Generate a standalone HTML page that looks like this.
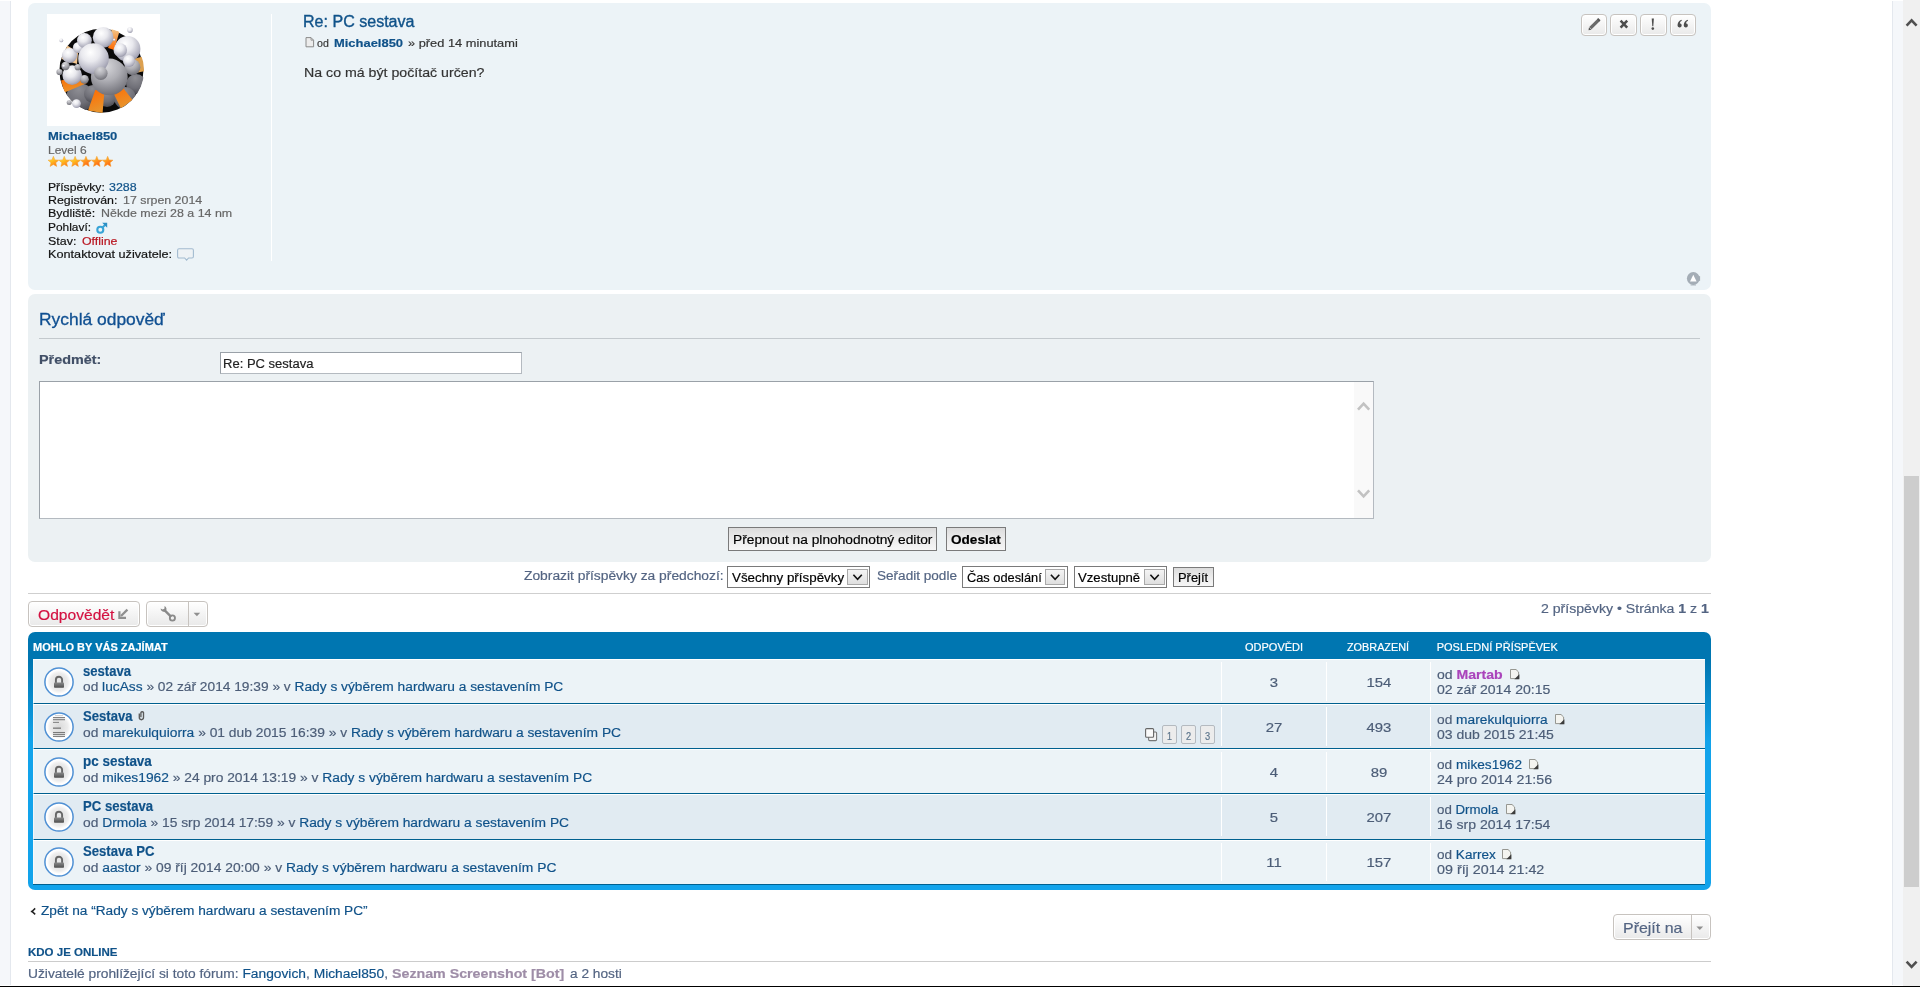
<!DOCTYPE html>
<html lang="cs">
<head>
<meta charset="utf-8">
<title>PC sestava</title>
<style>
html,body{margin:0;padding:0;}
body{width:1920px;height:987px;overflow:hidden;background:#fff;position:relative;font-family:"Liberation Sans",sans-serif;}
.a{position:absolute;box-sizing:border-box;}
.t{position:absolute;white-space:nowrap;line-height:1;font-family:"Liberation Sans",sans-serif;-webkit-text-stroke:0.18px currentColor;}
.t a{color:#105289;text-decoration:none;}
.t b{font-weight:700;}
svg{position:absolute;overflow:visible;}
.btn{border:1px solid #c7c3bf;border-radius:4px;background:linear-gradient(#ffffff,#e9e9e9);box-shadow:inset 0 0 0 1px #fff;}
.fbtn{border:1px solid #7a7a7a;background:linear-gradient(#dcdcdc,#eaeaea 45%,#f6f6f6);}
.sel{border:1px solid #7a7a7a;background:#fff;}
.dd{border:1px solid #a9a9a9;background:linear-gradient(#f4f4f4,#dfdfdf);}
.row{left:33px;width:1672px;height:45px;border-top:1px solid #fff;border-bottom:1px solid #00608f;}
.div{width:1px;background:#fff;height:39px;}
.pbox{border:1px solid #b4bac0;background:#ececec;border-radius:2px;width:15px;height:19px;top:725px;}
</style>
</head>
<body>
<!-- side strips -->
<div class="a" style="left:0;top:1px;width:11px;height:984px;background:#f5f7fa;border-right:1px solid #e4e8ee;"></div>
<div class="a" style="left:1892px;top:1px;width:11px;height:984px;background:#f5f7fa;border-left:1px solid #e4e8ee;"></div>
<!-- page scrollbar -->
<div class="a" style="left:1903px;top:0;width:17px;height:986px;background:#f0f0f0;"></div>
<div class="a" style="left:1904px;top:476px;width:15px;height:411px;background:#cdcdcd;"></div>
<svg style="left:1903px;top:0" width="17" height="987"><path d="M3.6 25.6 L8.6 20.4 L13.6 25.6" fill="none" stroke="#505050" stroke-width="2.6"/><path d="M3.6 961.6 L8.6 966.8 L13.6 961.6" fill="none" stroke="#505050" stroke-width="2.6"/></svg>
<!-- post -->
<div class="a" style="left:28px;top:3px;width:1683px;height:287px;background:#ecf3f7;border-radius:7px;"></div>
<div class="a" style="left:47px;top:14px;width:113px;height:112px;background:#fff;"></div>
<div class="a" style="left:271px;top:14px;width:1px;height:247px;background:#fff;"></div>
<svg style="left:47px;top:14px" width="113" height="112" viewBox="0 0 113 112"><defs>
<radialGradient id="bw" cx="40%" cy="30%" r="75%"><stop offset="0" stop-color="#ffffff"/><stop offset="0.4" stop-color="#e9e9ee"/><stop offset="0.8" stop-color="#b4b4c2"/><stop offset="1" stop-color="#9090a2"/></radialGradient>
<radialGradient id="bg" cx="42%" cy="22%" r="85%"><stop offset="0" stop-color="#d6d6da"/><stop offset="0.45" stop-color="#aeaeb4"/><stop offset="1" stop-color="#66666e"/></radialGradient>
<radialGradient id="bd" cx="45%" cy="20%" r="85%"><stop offset="0" stop-color="#8e8e94"/><stop offset="0.6" stop-color="#6e6e76"/><stop offset="1" stop-color="#47474e"/></radialGradient>
<linearGradient id="og" x1="0" y1="0" x2="0.3" y2="1"><stop offset="0" stop-color="#ff6a00"/><stop offset="1" stop-color="#e8932c"/></linearGradient>
<linearGradient id="og2" x1="0" y1="0" x2="0" y2="1"><stop offset="0" stop-color="#f1c58a"/><stop offset="1" stop-color="#ff6a00"/></linearGradient>
<clipPath id="ball"><circle cx="54.4" cy="56.4" r="42.6"/></clipPath>
</defs><circle cx="54.4" cy="56.8" r="42" fill="#0a0a0a"/><g clip-path="url(#ball)"><circle cx="33.1" cy="83.6" r="14" fill="url(#bd)"/><circle cx="89.1" cy="70.0" r="10" fill="url(#bd)"/><circle cx="60.0" cy="84.0" r="9" fill="url(#bd)"/><circle cx="78.0" cy="84.0" r="11" fill="url(#bd)"/><circle cx="46.0" cy="80.0" r="9" fill="url(#bd)"/><path d="M48.3 76 L57.5 76 L55.6 99 L41 96.5 Z" fill="url(#og)"/><path d="M63.5 73 L73.3 70.6 L85.6 86 L74 94.5 Z" fill="url(#og)"/><path d="M14 66.5 L33.1 62 L40 69 L17.5 78.5 Z" fill="url(#og)"/><path d="M64.7 15 L72.4 17.5 L67.2 36 L61.2 34 Z" fill="url(#og2)"/><path d="M86 45 L96 42.4 L98 57 L91 58.4 Z" fill="#dca050"/><path d="M14.5 45 L20.4 31.5 L31 38.6 L30 50 Z" fill="#f1c48f"/></g><circle cx="85.4" cy="53.2" r="8" fill="url(#bg)"/><circle cx="62.3" cy="62.9" r="18.4" fill="url(#bg)"/><circle cx="25.2" cy="61.1" r="9.8" fill="url(#bw)"/><circle cx="22.5" cy="41.5" r="7.6" fill="url(#bw)"/><circle cx="31.5" cy="33.5" r="5.6" fill="url(#bw)"/><circle cx="18.5" cy="52.0" r="4.2" fill="url(#bg)"/><circle cx="12.5" cy="58.0" r="3.1" fill="url(#bg)"/><circle cx="30.7" cy="53.2" r="3.1" fill="url(#bg)"/><circle cx="37.4" cy="65.3" r="4.4" fill="url(#bg)"/><circle cx="80.6" cy="34.9" r="12.8" fill="url(#bw)"/><circle cx="56.2" cy="23.4" r="10.4" fill="url(#bw)"/><circle cx="37.4" cy="26.4" r="7.4" fill="url(#bw)"/><circle cx="46.5" cy="44.6" r="15.3" fill="url(#bw)"/><circle cx="73.3" cy="36.1" r="6.8" fill="url(#bw)"/><circle cx="53.8" cy="59.2" r="6.8" fill="url(#bg)"/><circle cx="82.0" cy="47.0" r="6" fill="url(#bw)"/><circle cx="29.5" cy="89.6" r="4.4" fill="url(#bw)"/><circle cx="22.2" cy="88.4" r="2.5" fill="url(#bg)"/><circle cx="14.3" cy="26.4" r="1.9" fill="url(#bw)"/><circle cx="83.0" cy="16.1" r="2.8" fill="url(#bw)"/><circle cx="16.7" cy="51.9" r="1.5" fill="url(#bw)"/><circle cx="67.2" cy="25.8" r="1.2" fill="url(#bw)"/></svg><svg style="left:48px;top:156px" width="66" height="12" viewBox="0 0 66 12"><defs><linearGradient id="st1" x1="0" y1="0" x2="0.6" y2="1"><stop offset="0" stop-color="#fff27a"/><stop offset="0.5" stop-color="#ffc21f"/><stop offset="1" stop-color="#ff7a1a"/></linearGradient><linearGradient id="st2" x1="0" y1="0" x2="0.6" y2="1"><stop offset="0" stop-color="#ffd24d"/><stop offset="0.5" stop-color="#ff9a1f"/><stop offset="1" stop-color="#ff5e14"/></linearGradient></defs><polygon points="5.40,0.30 6.87,3.88 10.73,4.17 7.78,6.67 8.69,10.43 5.40,8.40 2.11,10.43 3.02,6.67 0.07,4.17 3.93,3.88" fill="url(#st1)" stroke="#f59a23" stroke-width="0.5" stroke-linejoin="round"/><polygon points="16.25,0.30 17.72,3.88 21.58,4.17 18.63,6.67 19.54,10.43 16.25,8.40 12.96,10.43 13.87,6.67 10.92,4.17 14.78,3.88" fill="url(#st1)" stroke="#f59a23" stroke-width="0.5" stroke-linejoin="round"/><polygon points="27.10,0.30 28.57,3.88 32.43,4.17 29.48,6.67 30.39,10.43 27.10,8.40 23.81,10.43 24.72,6.67 21.77,4.17 25.63,3.88" fill="url(#st1)" stroke="#f59a23" stroke-width="0.5" stroke-linejoin="round"/><polygon points="37.95,0.30 39.42,3.88 43.28,4.17 40.33,6.67 41.24,10.43 37.95,8.40 34.66,10.43 35.57,6.67 32.62,4.17 36.48,3.88" fill="url(#st2)" stroke="#f59a23" stroke-width="0.5" stroke-linejoin="round"/><polygon points="48.80,0.30 50.27,3.88 54.13,4.17 51.18,6.67 52.09,10.43 48.80,8.40 45.51,10.43 46.42,6.67 43.47,4.17 47.33,3.88" fill="url(#st2)" stroke="#f59a23" stroke-width="0.5" stroke-linejoin="round"/><polygon points="59.65,0.30 61.12,3.88 64.98,4.17 62.03,6.67 62.94,10.43 59.65,8.40 56.36,10.43 57.27,6.67 54.32,4.17 58.18,3.88" fill="url(#st2)" stroke="#f59a23" stroke-width="0.5" stroke-linejoin="round"/></svg><svg style="left:96px;top:222px" width="12" height="12" viewBox="0 0 12 12"><circle cx="4.3" cy="7.7" r="3" fill="none" stroke="#38a3d6" stroke-width="2.1"/><path d="M6.3 5.7 L10 2" stroke="#38a3d6" stroke-width="2" fill="none"/><path d="M6.2 0.8 L11.2 0.8 L11.2 5.8 Z" fill="#2d8fc4"/></svg><svg style="left:177px;top:248px" width="18" height="14" viewBox="0 0 18 14"><path d="M2 0.8 H15 Q16.4 0.8 16.4 2.2 V8.6 Q16.4 10 15 10 H11.6 L9.6 12.2 L7.6 10 H2 Q0.6 10 0.6 8.6 V2.2 Q0.6 0.8 2 0.8 Z" fill="#eef2f5" stroke="#a3bbd0" stroke-width="1.1"/></svg>
<div class="a btn" style="left:1581px;top:14px;width:26px;height:22px;"></div><div class="a btn" style="left:1610px;top:14px;width:27px;height:22px;"></div><div class="a btn" style="left:1640px;top:14px;width:27px;height:22px;"></div><div class="a btn" style="left:1670px;top:14px;width:26px;height:22px;"></div><svg style="left:1581px;top:14px" width="120" height="22" viewBox="0 0 120 22"><path d="M9.4 14.2 L17.8 5.8" stroke="#6a6a6a" stroke-width="3.3" fill="none"/><path d="M17.2 6.4 L18.4 5.2" stroke="#555" stroke-width="3.3" fill="none"/><path d="M7.5 16.3 L8 13.2 L10.5 15.8 Z" fill="#555"/><path d="M39.6 6.6 L46.2 13.6 M46.2 6.6 L39.6 13.6" stroke="#4d4d4d" stroke-width="2.5" fill="none"/><path d="M70.7 4.6 L72.9 4.6 L72.3 12.2 L71.3 12.2 Z" fill="#4d4d4d"/><circle cx="71.8" cy="14.6" r="1.3" fill="#4d4d4d"/><path d="M100.60000000000001 5.8 Q96.80000000000001 7.2 96.5 11.2 A2.1 2.1 0 1 0 98.80000000000001 9.2 Q98.9 7.6 100.80000000000001 6.8 Z" fill="#4d4d4d"/><path d="M106.8 5.8 Q103.0 7.2 102.69999999999999 11.2 A2.1 2.1 0 1 0 105.0 9.2 Q105.1 7.6 107.0 6.8 Z" fill="#4d4d4d"/></svg><svg style="left:1686px;top:271px" width="16" height="16" viewBox="0 0 16 16"><circle cx="7.3" cy="7.5" r="6.4" fill="#a4adb6"/><rect x="12.6" y="5.2" width="1.5" height="4.6" fill="#a4adb6"/><path d="M7.3 3.8 L10.6 10.4 L4 10.4 Z" fill="#fff"/><rect x="4.6" y="13.6" width="5.4" height="1" fill="#a4adb6" opacity=".7"/></svg><svg style="left:305px;top:37px" width="10" height="11" viewBox="0 0 10 11"><path d="M1 0.6 H6 L8.6 3.2 V9.8 H1 Z" fill="#ececec" stroke="#8a8a8a" stroke-width="1"/><path d="M6 0.6 V3.2 H8.6" fill="none" stroke="#8a8a8a" stroke-width="0.8"/></svg>
<!-- quick reply -->
<div class="a" style="left:28px;top:294px;width:1683px;height:268px;background:#ecf1f3;border-radius:7px;"></div>
<div class="a" style="left:39px;top:338px;width:1661px;height:1px;background:#c3c9cd;"></div>
<div class="a" style="left:220px;top:352px;width:302px;height:22px;background:#fff;border:1px solid #b4bac0;border-top-color:#9aa1a8;border-left-color:#9aa1a8;"></div>
<div class="a" style="left:39px;top:381px;width:1335px;height:138px;background:#fff;border:1px solid #b4bac0;border-top-color:#9aa1a8;border-left-color:#9aa1a8;"></div>
<div class="a" style="left:1354px;top:382px;width:19px;height:136px;background:#f9f9f9;"></div>
<svg style="left:1354px;top:382px" width="19" height="136"><path d="M4 27.6 L9.6 21.6 L15.2 27.6" fill="none" stroke="#c2c2c2" stroke-width="2.6"/><path d="M4 108.4 L9.6 114.4 L15.2 108.4" fill="none" stroke="#c2c2c2" stroke-width="2.6"/></svg>
<div class="a fbtn" style="left:728px;top:527px;width:209px;height:24px;"></div>
<div class="a fbtn" style="left:946px;top:527px;width:60px;height:24px;"></div>
<!-- sort row -->
<div class="a sel" style="left:727px;top:566px;width:143px;height:22px;"></div>
<div class="a dd" style="left:847px;top:569px;width:21px;height:16px;"></div>
<div class="a sel" style="left:962px;top:566px;width:106px;height:22px;"></div>
<div class="a dd" style="left:1045px;top:569px;width:20px;height:16px;"></div>
<div class="a sel" style="left:1074px;top:566px;width:93px;height:22px;"></div>
<div class="a dd" style="left:1144px;top:569px;width:21px;height:16px;"></div>
<svg style="left:0;top:569px" width="1200" height="16"><g fill="none" stroke="#111" stroke-width="1.6"><path d="M853.4 5.8 L857.6 10.4 L861.8 5.8"/><path d="M1050.9 5.8 L1055.1 10.4 L1059.3 5.8"/><path d="M1150.4 5.8 L1154.6 10.4 L1158.8 5.8"/></g></svg>
<div class="a fbtn" style="left:1173px;top:567px;width:41px;height:20px;"></div>
<div class="a" style="left:28px;top:593px;width:1683px;height:1px;background:#cfcfcf;"></div>
<!-- action bar -->
<div class="a btn" style="left:28px;top:601px;width:112px;height:26px;"></div>
<div class="a btn" style="left:146px;top:601px;width:62px;height:26px;"></div>
<div class="a" style="left:188px;top:602px;width:1px;height:24px;background:#c7c3bf;"></div>
<svg style="left:118px;top:608px" width="12" height="12" viewBox="0 0 12 12"><path d="M9.4 1.6 L3 8" stroke="#8f8f8f" stroke-width="2.2" fill="none"/><path d="M1.4 3.2 V9.8 H8" stroke="#8f8f8f" stroke-width="2.2" fill="none"/></svg><svg style="left:159px;top:605px" width="18" height="18" viewBox="0 0 18 18"><path d="M5 4.6 L12.2 11.8" stroke="#8a8a8a" stroke-width="2.4" fill="none"/><circle cx="13.4" cy="13" r="2.6" fill="none" stroke="#8a8a8a" stroke-width="1.8"/><path d="M1.6 3.4 A3.4 3.4 0 0 0 6.6 6.4 A3.4 3.4 0 0 0 5.6 1 L5.4 3.8 L3.6 4.4 Z" fill="#8a8a8a"/></svg><svg style="left:193px;top:612px" width="8" height="5" viewBox="0 0 8 5"><path d="M0.6 0.8 H7.2 L3.9 4.2 Z" fill="#8f8f8f"/></svg>
<!-- forumbg -->
<div class="a" style="left:28px;top:632px;width:1683px;height:258px;border-radius:7px;background:linear-gradient(#0076b1 0,#0076b1 30px,#12a3eb 110px,#12a3eb 100%);"></div>
<div class="a row" style="top:659px;background:#ecf3f7;"></div>
<div class="a row" style="top:704px;background:#e1ebf2;"></div>
<div class="a row" style="top:749px;background:#ecf3f7;"></div>
<div class="a row" style="top:794px;height:46px;background:#e1ebf2;"></div>
<div class="a row" style="top:840px;background:#ecf3f7;"></div>
<div class="a" style="left:33px;top:660px;width:1px;height:224px;background:rgba(255,255,255,.55);"></div>
<div class="a div" style="left:1221px;top:662px;height:39px;"></div><div class="a div" style="left:1326px;top:662px;height:39px;"></div><div class="a div" style="left:1430px;top:662px;height:39px;"></div><div class="a div" style="left:1221px;top:707px;height:39px;"></div><div class="a div" style="left:1326px;top:707px;height:39px;"></div><div class="a div" style="left:1430px;top:707px;height:39px;"></div><div class="a div" style="left:1221px;top:752px;height:39px;"></div><div class="a div" style="left:1326px;top:752px;height:39px;"></div><div class="a div" style="left:1430px;top:752px;height:39px;"></div><div class="a div" style="left:1221px;top:797px;height:39px;"></div><div class="a div" style="left:1326px;top:797px;height:39px;"></div><div class="a div" style="left:1430px;top:797px;height:39px;"></div><div class="a div" style="left:1221px;top:843px;height:38px;"></div><div class="a div" style="left:1326px;top:843px;height:38px;"></div><div class="a div" style="left:1430px;top:843px;height:38px;"></div><svg style="left:0;top:0" width="1920" height="987" viewBox="0 0 1920 987"><defs><radialGradient id="tic" cx="50%" cy="50%" r="50%"><stop offset="0" stop-color="#d9d9d9"/><stop offset="0.62" stop-color="#ececec"/><stop offset="0.85" stop-color="#ffffff"/><stop offset="1" stop-color="#ffffff"/></radialGradient><linearGradient id="lk" x1="0" y1="0" x2="0" y2="1"><stop offset="0" stop-color="#8a8a8a"/><stop offset="1" stop-color="#4e4e4e"/></linearGradient></defs><circle cx="59" cy="682" r="14.1" fill="url(#tic)" stroke="#4f90d4" stroke-width="1.5"/><path d="M55.9 683 V679.8 A3.1 3.1 0 0 1 62.1 679.8 V683" fill="#e8e8e8" stroke="#666" stroke-width="1.9"/><rect x="54" y="682.4" width="10" height="5.4" rx="0.8" fill="url(#lk)"/><circle cx="59" cy="727" r="14.1" fill="url(#tic)" stroke="#4f90d4" stroke-width="1.5"/><path d="M55 715.6 H63" stroke="#707070" stroke-width="0.8" opacity="0.4"/><path d="M53 717.6 H65" stroke="#707070" stroke-width="1.1" opacity="0.9"/><path d="M53 719.7 H65" stroke="#707070" stroke-width="1.1" opacity="0.9"/><path d="M53 722.4 H59" stroke="#707070" stroke-width="1.1" opacity="0.8"/><path d="M53 728.2 H61" stroke="#707070" stroke-width="1.6" opacity="0.75"/><path d="M53 732.5 H65" stroke="#707070" stroke-width="1.1" opacity="0.9"/><path d="M53 734.4 H65" stroke="#707070" stroke-width="1.1" opacity="0.9"/><path d="M53 736.4 H65" stroke="#707070" stroke-width="1.1" opacity="0.9"/><circle cx="59" cy="772" r="14.1" fill="url(#tic)" stroke="#4f90d4" stroke-width="1.5"/><path d="M55.9 773 V769.8 A3.1 3.1 0 0 1 62.1 769.8 V773" fill="#e8e8e8" stroke="#666" stroke-width="1.9"/><rect x="54" y="772.4" width="10" height="5.4" rx="0.8" fill="url(#lk)"/><circle cx="59" cy="817" r="14.1" fill="url(#tic)" stroke="#4f90d4" stroke-width="1.5"/><path d="M55.9 818 V814.8 A3.1 3.1 0 0 1 62.1 814.8 V818" fill="#e8e8e8" stroke="#666" stroke-width="1.9"/><rect x="54" y="817.4" width="10" height="5.4" rx="0.8" fill="url(#lk)"/><circle cx="59" cy="862" r="14.1" fill="url(#tic)" stroke="#4f90d4" stroke-width="1.5"/><path d="M55.9 863 V859.8 A3.1 3.1 0 0 1 62.1 859.8 V863" fill="#e8e8e8" stroke="#666" stroke-width="1.9"/><rect x="54" y="862.4" width="10" height="5.4" rx="0.8" fill="url(#lk)"/><path d="M139.3 713.4 V717.6 A2.1 2.1 0 0 0 143.5 717.6 V712.6 A1.4 1.4 0 0 0 140.9 712.6 V717.2" fill="none" stroke="#5a5a5a" stroke-width="1.35"/><rect x="1148.6" y="732" width="8" height="8.6" rx="1" fill="#f2f2f2" stroke="#777" stroke-width="1.1"/><rect x="1145.6" y="728.6" width="8" height="8.6" rx="1" fill="#fafafa" stroke="#666" stroke-width="1.1"/><path d="M1510.5 669.5 H1516 L1518.6 672 V678.6 H1510.5 Z" fill="#f4f4f0" stroke="#8c8c86" stroke-width="0.9"/><path d="M1519.4 674.2 V679.2 H1514.4 Z" fill="#3c3c3c"/><path d="M1555.5 714.5 H1561 L1563.6 717 V723.6 H1555.5 Z" fill="#f4f4f0" stroke="#8c8c86" stroke-width="0.9"/><path d="M1564.4 719.2 V724.2 H1559.4 Z" fill="#3c3c3c"/><path d="M1529.5 759.5 H1535 L1537.6 762 V768.6 H1529.5 Z" fill="#f4f4f0" stroke="#8c8c86" stroke-width="0.9"/><path d="M1538.4 764.2 V769.2 H1533.4 Z" fill="#3c3c3c"/><path d="M1506.5 804.5 H1512 L1514.6 807 V813.6 H1506.5 Z" fill="#f4f4f0" stroke="#8c8c86" stroke-width="0.9"/><path d="M1515.4 809.2 V814.2 H1510.4 Z" fill="#3c3c3c"/><path d="M1502.5 849.5 H1508 L1510.6 852 V858.6 H1502.5 Z" fill="#f4f4f0" stroke="#8c8c86" stroke-width="0.9"/><path d="M1511.4 854.2 V859.2 H1506.4 Z" fill="#3c3c3c"/></svg><div class="a pbox" style="left:1162px;"></div><div class="a pbox" style="left:1181px;"></div><div class="a pbox" style="left:1200px;"></div>
<!-- bottom -->
<div class="a btn" style="left:1613px;top:914px;width:98px;height:26px;"></div>
<div class="a" style="left:1691px;top:915px;width:1px;height:24px;background:#c7c3bf;"></div>
<div class="a" style="left:28px;top:961px;width:1683px;height:1px;background:#cccccc;"></div>
<svg style="left:30px;top:907px" width="7" height="9" viewBox="0 0 7 9"><path d="M5.2 1.4 L2 4.4 L5.2 7.4" fill="none" stroke="#222" stroke-width="1.5"/><rect x="0.8" y="3.8" width="1.4" height="1.4" fill="#222"/></svg><svg style="left:1696px;top:926px" width="8" height="5" viewBox="0 0 8 5"><path d="M0.4 0.4 H7.2 L3.8 4 Z" fill="#8f8f8f"/></svg>
<div style="position:absolute;left:0;top:0;width:1920px;height:987px;will-change:transform;">
<span class="t" id="ttl" style="top:14.29px;font-size:15.6px;color:#105289;-webkit-text-stroke:0.35px #105289;left:303.42px;transform-origin:0 0;transform:scaleX(1.0292);">Re: PC sestava</span>
<span class="t" id="au1" style="top:37.85px;font-size:11.4px;color:#333;left:317.00px;transform-origin:0 0;transform:scaleX(0.9308);">od</span>
<span class="t" id="au2" style="top:37.85px;font-size:11.4px;color:#105289;font-weight:700;left:334.40px;transform-origin:0 0;transform:scaleX(1.1353);">Michael850</span>
<span class="t" id="au3" style="top:37.85px;font-size:11.4px;color:#333;left:408.00px;transform-origin:0 0;transform:scaleX(1.1254);">» před 14 minutami</span>
<span class="t" id="body" style="top:66.07px;font-size:13.5px;color:#333;left:304.32px;transform-origin:0 0;transform:scaleX(1.0498);">Na co má být počítač určen?</span>
<span class="t" id="pn" style="top:130.85px;font-size:11.4px;color:#105289;font-weight:700;left:48.00px;transform-origin:0 0;transform:scaleX(1.1405);">Michael850</span>
<span class="t" id="pl" style="top:144.85px;font-size:11.4px;color:#666;left:48.00px;transform-origin:0 0;transform:scaleX(1.0496);">Level 6</span>
<span class="t" id="p1a" style="top:181.85px;font-size:11.4px;color:#111;left:48.00px;transform-origin:0 0;transform:scaleX(1.0681);">Příspěvky:</span>
<span class="t" id="p1b" style="top:181.85px;font-size:11.4px;color:#105289;left:109.31px;transform-origin:0 0;transform:scaleX(1.0910);">3288</span>
<span class="t" id="p2a" style="top:194.85px;font-size:11.4px;color:#111;left:48.00px;transform-origin:0 0;transform:scaleX(1.0857);">Registrován:</span>
<span class="t" id="p2b" style="top:194.85px;font-size:11.4px;color:#666;left:122.50px;transform-origin:0 0;transform:scaleX(1.0867);">17 srpen 2014</span>
<span class="t" id="p3a" style="top:207.85px;font-size:11.4px;color:#111;left:48.00px;transform-origin:0 0;transform:scaleX(1.0947);">Bydliště:</span>
<span class="t" id="p3b" style="top:207.85px;font-size:11.4px;color:#666;left:100.69px;transform-origin:0 0;transform:scaleX(1.0908);">Někde mezi 28 a 14 nm</span>
<span class="t" id="p4a" style="top:221.85px;font-size:11.4px;color:#111;left:48.00px;transform-origin:0 0;transform:scaleX(1.0446);">Pohlaví:</span>
<span class="t" id="p5a" style="top:235.85px;font-size:11.4px;color:#111;left:48.00px;transform-origin:0 0;transform:scaleX(1.0920);">Stav:</span>
<span class="t" id="p5b" style="top:235.85px;font-size:11.4px;color:#b8131e;left:82.00px;transform-origin:0 0;transform:scaleX(1.0824);">Offline</span>
<span class="t" id="p6a" style="top:248.85px;font-size:11.4px;color:#111;left:48.00px;transform-origin:0 0;transform:scaleX(1.1137);">Kontaktovat uživatele:</span>
<span class="t" id="qr" style="top:310.86px;font-size:17.3px;color:#0f4f91;-webkit-text-stroke:0.3px #0f4f91;left:38.50px;transform-origin:0 0;transform:scaleX(1.0070);">Rychlá odpověď</span>
<span class="t" id="subj" style="top:353.92px;font-size:12.5px;color:#425067;font-weight:700;left:39.00px;transform-origin:0 0;transform:scaleX(1.1507);">Předmět:</span>
<span class="t" id="inp" style="top:357.92px;font-size:12.5px;color:#222;left:223.00px;transform-origin:0 0;transform:scaleX(1.0415);">Re: PC sestava</span>
<span class="t" id="b1" style="top:533.92px;font-size:12.5px;color:#000;left:732.50px;transform-origin:0 0;transform:scaleX(1.0995);">Přepnout na plnohodnotný editor</span>
<span class="t" id="b2" style="top:533.92px;font-size:12.5px;color:#000;font-weight:700;left:950.60px;transform-origin:0 0;transform:scaleX(1.0869);">Odeslat</span>
<span class="t" id="s0" style="top:569.92px;font-size:12.5px;color:#536482;left:524.00px;transform-origin:0 0;transform:scaleX(1.1050);">Zobrazit příspěvky za předchozí:</span>
<span class="t" id="s1" style="top:571.92px;font-size:12.5px;color:#000;left:732.00px;transform-origin:0 0;transform:scaleX(1.0685);">Všechny příspěvky</span>
<span class="t" id="s2l" style="top:569.92px;font-size:12.5px;color:#536482;left:877.00px;transform-origin:0 0;transform:scaleX(1.0853);">Seřadit podle</span>
<span class="t" id="s2" style="top:571.92px;font-size:12.5px;color:#000;left:966.50px;transform-origin:0 0;transform:scaleX(1.0247);">Čas odeslání</span>
<span class="t" id="s3" style="top:571.92px;font-size:12.5px;color:#000;left:1078.31px;transform-origin:0 0;transform:scaleX(1.0529);">Vzestupně</span>
<span class="t" id="s4" style="top:571.92px;font-size:12.5px;color:#000;left:1178.30px;transform-origin:0 0;transform:scaleX(1.0323);">Přejít</span>
<span class="t" id="rep" style="top:608.23px;font-size:14.5px;color:#d31141;left:38.00px;transform-origin:0 0;transform:scaleX(1.0761);">Odpovědět</span>
<span class="t" id="pg" style="top:602.92px;font-size:12.5px;color:#536482;left:1541.40px;transform-origin:0 0;transform:scaleX(1.1277);">2 příspěvky • Stránka <b>1</b> z <b>1</b></span>
<span class="t" id="h0" style="top:642.19px;font-size:11px;color:#fff;font-weight:700;left:33.00px;transform-origin:0 0;">MOHLO BY VÁS ZAJÍMAT</span>
<span class="t" id="h1" style="top:642.19px;font-size:11px;color:#fff;left:1245.00px;transform-origin:0 0;">ODPOVĚDI</span>
<span class="t" id="h2" style="top:642.19px;font-size:11px;color:#fff;left:1347.00px;transform-origin:0 0;transform:scaleX(0.9859);">ZOBRAZENÍ</span>
<span class="t" id="h3" style="top:642.19px;font-size:11px;color:#fff;left:1436.70px;transform-origin:0 0;">POSLEDNÍ PŘÍSPĚVEK</span>
<span class="t" id="r0t" style="top:664.82px;font-size:13.8px;color:#105289;font-weight:700;left:83.00px;transform-origin:0 0;transform:scaleX(0.9469);">sestava</span>
<span class="t" id="r0l" style="top:680.92px;font-size:12.5px;color:#4c5d77;left:83.00px;transform-origin:0 0;transform:scaleX(1.0989);">od <a>lucAss</a> » 02 zář 2014 19:39 » v <a>Rady s výběrem hardwaru a sestavením PC</a></span>
<span class="t" id="r0p" style="top:676.92px;font-size:12.5px;color:#4c5d77;left:1224.00px;width:100px;text-align:center;transform:scaleX(1.19);">3</span>
<span class="t" id="r0v" style="top:676.92px;font-size:12.5px;color:#4c5d77;left:1328.70px;width:100px;text-align:center;transform:scaleX(1.19);">154</span>
<span class="t" id="r0a" style="top:668.92px;font-size:12.5px;color:#4c5d77;left:1437.00px;transform-origin:0 0;transform:scaleX(1.1241);">od <a style="color:#a4b;font-weight:700">Martab</a></span>
<span class="t" id="r0d" style="top:683.92px;font-size:12.5px;color:#4c5d77;left:1437.00px;transform-origin:0 0;transform:scaleX(1.1248);">02 zář 2014 20:15</span>
<span class="t" id="r1t" style="top:709.82px;font-size:13.8px;color:#105289;font-weight:700;left:83.00px;transform-origin:0 0;transform:scaleX(0.9484);">Sestava</span>
<span class="t" id="r1l" style="top:726.92px;font-size:12.5px;color:#4c5d77;left:83.00px;transform-origin:0 0;transform:scaleX(1.1046);">od <a>marekulquiorra</a> » 01 dub 2015 16:39 » v <a>Rady s výběrem hardwaru a sestavením PC</a></span>
<span class="t" id="r1p" style="top:721.92px;font-size:12.5px;color:#4c5d77;left:1224.00px;width:100px;text-align:center;transform:scaleX(1.19);">27</span>
<span class="t" id="r1v" style="top:721.92px;font-size:12.5px;color:#4c5d77;left:1328.70px;width:100px;text-align:center;transform:scaleX(1.19);">493</span>
<span class="t" id="r1a" style="top:713.92px;font-size:12.5px;color:#4c5d77;left:1437.00px;transform-origin:0 0;transform:scaleX(1.0984);">od <a>marekulquiorra</a></span>
<span class="t" id="r1d" style="top:728.92px;font-size:12.5px;color:#4c5d77;left:1437.00px;transform-origin:0 0;transform:scaleX(1.1211);">03 dub 2015 21:45</span>
<span class="t" id="r2t" style="top:754.82px;font-size:13.8px;color:#105289;font-weight:700;left:83.00px;transform-origin:0 0;transform:scaleX(0.9754);">pc sestava</span>
<span class="t" id="r2l" style="top:771.92px;font-size:12.5px;color:#4c5d77;left:83.00px;transform-origin:0 0;transform:scaleX(1.1034);">od <a>mikes1962</a> » 24 pro 2014 13:19 » v <a>Rady s výběrem hardwaru a sestavením PC</a></span>
<span class="t" id="r2p" style="top:766.92px;font-size:12.5px;color:#4c5d77;left:1224.00px;width:100px;text-align:center;transform:scaleX(1.19);">4</span>
<span class="t" id="r2v" style="top:766.92px;font-size:12.5px;color:#4c5d77;left:1328.70px;width:100px;text-align:center;transform:scaleX(1.19);">89</span>
<span class="t" id="r2a" style="top:758.92px;font-size:12.5px;color:#4c5d77;left:1437.00px;transform-origin:0 0;transform:scaleX(1.0922);">od <a>mikes1962</a></span>
<span class="t" id="r2d" style="top:773.92px;font-size:12.5px;color:#4c5d77;left:1437.00px;transform-origin:0 0;transform:scaleX(1.1334);">24 pro 2014 21:56</span>
<span class="t" id="r3t" style="top:799.82px;font-size:13.8px;color:#105289;font-weight:700;left:83.00px;transform-origin:0 0;transform:scaleX(0.9512);">PC sestava</span>
<span class="t" id="r3l" style="top:816.92px;font-size:12.5px;color:#4c5d77;left:83.00px;transform-origin:0 0;transform:scaleX(1.1033);">od <a>Drmola</a> » 15 srp 2014 17:59 » v <a>Rady s výběrem hardwaru a sestavením PC</a></span>
<span class="t" id="r3p" style="top:811.92px;font-size:12.5px;color:#4c5d77;left:1224.00px;width:100px;text-align:center;transform:scaleX(1.19);">5</span>
<span class="t" id="r3v" style="top:811.92px;font-size:12.5px;color:#4c5d77;left:1328.70px;width:100px;text-align:center;transform:scaleX(1.19);">207</span>
<span class="t" id="r3a" style="top:803.92px;font-size:12.5px;color:#4c5d77;left:1437.00px;transform-origin:0 0;transform:scaleX(1.0625);">od <a>Drmola</a></span>
<span class="t" id="r3d" style="top:818.92px;font-size:12.5px;color:#4c5d77;left:1437.00px;transform-origin:0 0;transform:scaleX(1.1248);">16 srp 2014 17:54</span>
<span class="t" id="r4t" style="top:844.82px;font-size:13.8px;color:#105289;font-weight:700;left:83.00px;transform-origin:0 0;transform:scaleX(0.9521);">Sestava PC</span>
<span class="t" id="r4l" style="top:861.92px;font-size:12.5px;color:#4c5d77;left:83.00px;transform-origin:0 0;transform:scaleX(1.1060);">od <a>aastor</a> » 09 říj 2014 20:00 » v <a>Rady s výběrem hardwaru a sestavením PC</a></span>
<span class="t" id="r4p" style="top:856.92px;font-size:12.5px;color:#4c5d77;left:1224.00px;width:100px;text-align:center;transform:scaleX(1.19);">11</span>
<span class="t" id="r4v" style="top:856.92px;font-size:12.5px;color:#4c5d77;left:1328.70px;width:100px;text-align:center;transform:scaleX(1.19);">157</span>
<span class="t" id="r4a" style="top:848.92px;font-size:12.5px;color:#4c5d77;left:1437.00px;transform-origin:0 0;transform:scaleX(1.0836);">od <a>Karrex</a></span>
<span class="t" id="r4d" style="top:863.92px;font-size:12.5px;color:#4c5d77;left:1437.00px;transform-origin:0 0;transform:scaleX(1.1438);">09 říj 2014 21:42</span>
<span class="t" id="back" style="top:904.92px;font-size:12.5px;color:#105289;left:41.20px;transform-origin:0 0;transform:scaleX(1.0933);">Zpět na “Rady s výběrem hardwaru a sestavením PC”</span>
<span class="t" id="jump" style="top:921.23px;font-size:14.5px;color:#536482;left:1622.60px;transform-origin:0 0;transform:scaleX(1.1004);">Přejít na</span>
<span class="t" id="kdo" style="top:946.77px;font-size:11.5px;color:#105289;font-weight:700;left:28.00px;transform-origin:0 0;">KDO JE ONLINE</span>
<span class="t" id="on1" style="top:967.92px;font-size:12.5px;color:#536482;left:28.00px;transform-origin:0 0;transform:scaleX(1.1022);">Uživatelé prohlížející si toto fórum: <a>Fangovich</a>, <a>Michael850</a>,</span>
<span class="t" id="on2" style="top:967.92px;font-size:12.5px;color:#9e8da7;font-weight:700;left:392.00px;transform-origin:0 0;transform:scaleX(1.1373);">Seznam Screenshot [Bot]</span>
<span class="t" id="on3" style="top:967.92px;font-size:12.5px;color:#536482;left:570.00px;transform-origin:0 0;transform:scaleX(1.0962);">a 2 hosti</span>
<span class="t" id="pn1" style="top:730.61px;font-size:10.5px;color:#5c758c;left:1167.00px;transform-origin:0 0;transform:scaleX(0.8500);">1</span>
<span class="t" id="pn2" style="top:730.61px;font-size:10.5px;color:#5c758c;left:1186.00px;transform-origin:0 0;transform:scaleX(0.8797);">2</span>
<span class="t" id="pn3" style="top:730.61px;font-size:10.5px;color:#5c758c;left:1205.30px;transform-origin:0 0;transform:scaleX(0.8834);">3</span>
</div>
<div class="a" style="left:0;top:986px;width:1920px;height:1px;background:#000;"></div>
</body>
</html>
